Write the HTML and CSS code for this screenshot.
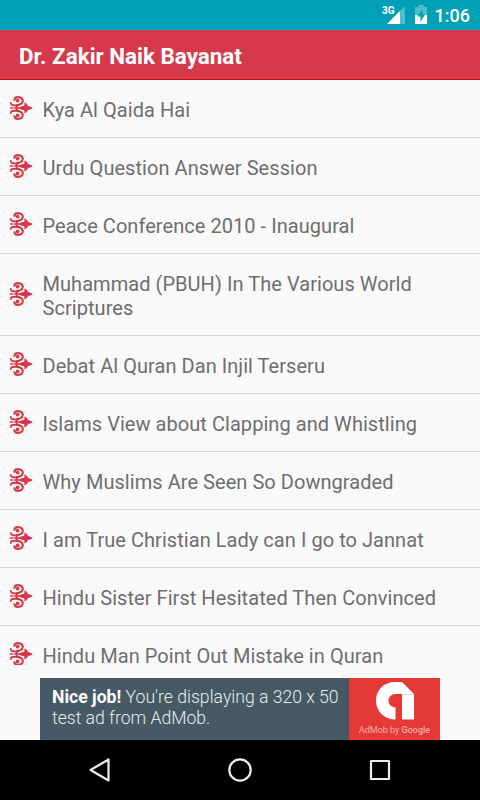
FILE: index.html
```html
<!DOCTYPE html>
<html lang="en">
<head>
    <meta charset="UTF-8">
    <meta name="viewport" content="width=device-width, initial-scale=1.0">
    <title>Dr. Zakir Naik Bayanat</title>
    <link rel="stylesheet" href="styles.css">
</head>
<body>
    <!-- Ornament used by every list row -->
    <svg class="sprite" width="0" height="0">
        <symbol id="ornament" viewBox="0 0 24 24">
            <g fill="none" stroke="#d63a4a" stroke-linecap="round">
                <path stroke-width="2.1" d="M5.4 3.8C5.6 1.8 7.4 1 9.2 1.1C12.2 1.2 14 3 13.8 5.2C13.5 7.8 10.5 8.9 8 9.4"/>
                <path stroke-width="2.1" d="M5.4 20.2C5.6 22.2 7.4 23 9.2 22.9C12.2 22.8 14 21 13.8 18.8C13.5 16.2 10.5 15.1 8 14.6"/>
                <path stroke-width="1.8" d="M1.8 7C1.8 9.3 4 9.4 8 9.4M1.8 17C1.8 14.7 4 14.6 8 14.6"/>
                <path stroke-width="1.8" d="M7.6 9V15"/>
                <path stroke-width="1.6" d="M1.6 12H3.6M5.4 12H18"/>
            </g>
            <g fill="#d63a4a">
                <circle cx="8.6" cy="4.6" r="1.9"/>
                <circle cx="8.6" cy="19.4" r="1.9"/>
                <path d="M9.5 12L13 10L15 10C15.6 9 15.4 8 15.4 6.6C17.6 7.2 18.6 8.6 19 10C20.6 10 22.4 11 23.8 12C22.4 13 20.6 14 19 14C18.6 15.4 17.6 16.8 15.4 17.4C15.4 16 15.6 15 15 14L13 14Z"/>
            </g>
        </symbol>
    </svg>

    <div class="status-bar">
        <span class="network">3G</span>
        <svg class="signal" width="18" height="18" viewBox="0 0 18 18">
            <path fill="#4dbccb" d="M18 0V18H0Z"/>
            <path fill="#fff" d="M13 5V18H0Z"/>
        </svg>
        <svg class="battery" width="12" height="19" viewBox="0 0 12 19">
            <path fill="#4dbccb" d="M3.5 0H8.5V2H12V10H0V2H3.5Z"/>
            <path fill="#fff" d="M0 10H12V19H0Z"/>
            <path fill="#00a1b7" d="M7.5 4.5L2 11.5H5.5V17L10 9.5H7.5Z"/>
        </svg>
        <span class="clock">1:06</span>
    </div>

    <header>
        <h1>Dr. Zakir Naik Bayanat</h1>
    </header>

    <ul class="list">
        <li><svg class="icon"><use href="#ornament"/></svg><span>Kya Al Qaida Hai</span></li>
        <li><svg class="icon"><use href="#ornament"/></svg><span>Urdu Question Answer Session</span></li>
        <li><svg class="icon"><use href="#ornament"/></svg><span>Peace Conference 2010 - Inaugural</span></li>
        <li><svg class="icon"><use href="#ornament"/></svg><span>Muhammad (PBUH) In The Various World Scriptures</span></li>
        <li><svg class="icon"><use href="#ornament"/></svg><span>Debat Al Quran Dan Injil Terseru</span></li>
        <li><svg class="icon"><use href="#ornament"/></svg><span>Islams View about Clapping and Whistling</span></li>
        <li><svg class="icon"><use href="#ornament"/></svg><span>Why Muslims Are Seen So Downgraded</span></li>
        <li><svg class="icon"><use href="#ornament"/></svg><span>I am True Christian Lady can I go to Jannat</span></li>
        <li><svg class="icon"><use href="#ornament"/></svg><span>Hindu Sister First Hesitated Then Convinced</span></li>
        <li><svg class="icon"><use href="#ornament"/></svg><span>Hindu Man Point Out Mistake in Quran</span></li>
    </ul>

    <div class="banner">
        <p class="banner-text"><b>Nice job!</b> You're displaying a 320 x 50 test ad from AdMob.</p>
        <div class="banner-logo">
            <svg width="38" height="38" viewBox="0 0 38 38">
                <path fill="#fff" d="M26 0L38 12V37.5H26V12H19C15.5 12 12.5 15 12.5 18.7C12.5 22.5 15.5 25.3 19.5 25.3V37.5C8 37.5 0 29 0 18.7C0 8 8 0 19 0Z"/>
                <path fill="#ddd" d="M26 12H38V13H26Z"/>
            </svg>
            <span>AdMob by <b>Google</b></span>
        </div>
    </div>

    <nav>
        <svg width="24" height="26" viewBox="0 0 24 26"><path d="M20.5 2.5V23.5L2.5 13Z"/></svg>
        <svg width="24" height="26" viewBox="0 0 24 26"><circle cx="12" cy="13" r="10.7"/></svg>
        <svg width="24" height="26" viewBox="0 0 24 26"><path d="M3 4H21V22H3Z"/></svg>
    </nav>
</body>
</html>
```

FILE: styles.css
```css
body {
  font-family: Roboto, "Liberation Sans", sans-serif;
  margin: 0;
  height: 800px;
  display: flex;
  flex-direction: column;
  overflow: hidden;
  background: #f9f9f9;
  color: #6e6e6e;
}

.sprite {
  display: none;
}

.status-bar {
  display: flex;
  justify-content: flex-end;
  align-items: flex-start;
  height: 30px;
  padding-right: 10px;
  box-sizing: border-box;
  background: #00a1b7;
  color: #fff;
}

.network {
  margin: 6px -8px 0 0;
  font-size: 10px;
  line-height: 10px;
  font-weight: bold;
}

.signal {
  margin: 6px 10px 0 0;
}

.battery {
  margin: 5px 8px 0 0;
}

.clock {
  font-size: 18px;
  line-height: 32px;
  font-weight: 500;
}

header {
  height: 50px;
  padding-left: 19px;
  box-sizing: border-box;
  background: #d63a4a;
  border-bottom: 1px solid #c8101a;
}

header h1 {
  margin: 0;
  font-size: 22.4px;
  line-height: 52px;
  font-weight: bold;
  color: #fff;
}

.list {
  height: 585px;
  margin: 0;
  padding: 0;
  overflow: hidden;
  list-style: none;
}

.list li {
  display: flex;
  align-items: center;
  padding: 17px 20px 16px 9px;
  border-bottom: 1px solid #d6d6d6;
  font-size: 20px;
  line-height: 24px;
  letter-spacing: 0.05px;
}

.list li span {
  margin: 1px 0 -1px;
}

.icon {
  flex: none;
  width: 24px;
  height: 24px;
  margin: -2px 9.5px 0 0;
}

.banner {
  display: flex;
  width: 400px;
  height: 62px;
  margin: 13px auto 0;
}

.banner-text {
  flex: 1;
  margin: 0;
  padding: 9px 0 0 12px;
  background: #455a64;
  color: #e8ecee;
  font-size: 17.6px;
  line-height: 21px;
  font-weight: 300;
}

.banner-text b {
  color: #fff;
  font-weight: bold;
}

.banner-logo {
  display: flex;
  flex-direction: column;
  align-items: center;
  width: 91px;
  padding-top: 4px;
  box-sizing: border-box;
  background: #e53935;
  color: #f5b0ae;
  font-size: 9px;
  line-height: 12px;
}

.banner-logo span {
  margin-top: 4px;
  white-space: nowrap;
}

.banner-logo b {
  font-weight: 500;
}

nav {
  display: flex;
  justify-content: space-between;
  align-items: center;
  height: 60px;
  padding: 0 88px;
  box-sizing: border-box;
  background: #000;
}

nav svg {
  fill: none;
  stroke: #eee;
  stroke-width: 2.2;
  stroke-linejoin: round;
}
```
